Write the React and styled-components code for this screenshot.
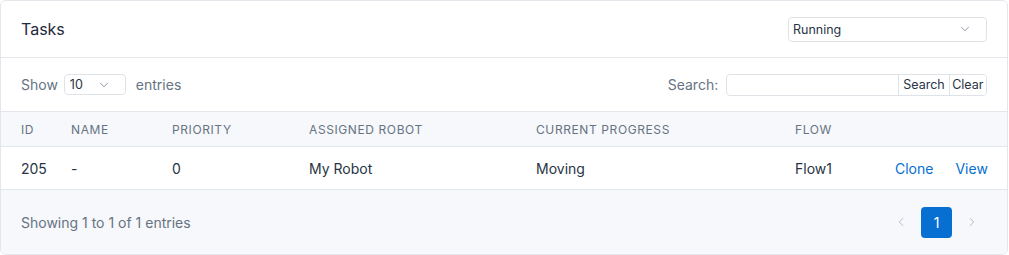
import React from "react"
import styled, { createGlobalStyle } from "styled-components"

const GlobalStyle = createGlobalStyle`
  * { box-sizing: border-box; }
  body {
    margin: 0;
    background: #ffffff;
    font-family: Inter, "Noto Sans", sans-serif;
    color: #283444;
  }
`

const Card = styled.div`
  width: 1008px;
  height: 255px;
  border: 1px solid #e3e6ea;
  border-radius: 6px;
  background: #ffffff;
  overflow: hidden;
  display: flex;
  flex-direction: column;
`

const CardHeader = styled.div`
  height: 57px;
  display: flex;
  align-items: center;
  justify-content: space-between;
  padding: 0 20px;
  border-bottom: 1px solid #e3e6ea;
`

const Title = styled.h3`
  margin: 0;
  font-size: 16px;
  font-weight: 400;
  color: #1f2a3a;
`

const SelectBox = styled.div`
  width: ${({ w }) => w}px;
  height: ${({ h }) => h}px;
  margin: 0 ${({ mr }) => mr || 0}px 0 ${({ ml }) => ml || 0}px;
  border: 1px solid #dfe3e8;
  border-radius: 4px;
  display: flex;
  align-items: center;
  justify-content: space-between;
  padding: 0 ${({ pr }) => pr}px 0 ${({ pl }) => pl}px;
  font-size: ${({ fs }) => fs}px;
  color: #283444;
  background: #fff;
`

const Controls = styled.div`
  height: 53px;
  display: flex;
  align-items: center;
  justify-content: space-between;
  padding: 0 20px;
  font-size: 14px;
  color: #667382;
`

const Group = styled.div`
  display: flex;
  align-items: center;
  gap: ${({ gap }) => gap || 0}px;
`

const SearchWrap = styled.div`
  display: flex;
  height: 22px;
  border: 1px solid #dfe3e8;
  border-radius: 4px;
  overflow: hidden;
`

const SearchInput = styled.div`
  width: 171px;
`

const SearchButton = styled.div`
  display: flex;
  align-items: center;
  padding: 0 ${({ px }) => px}px;
  border-left: 1px solid #dfe3e8;
  font-size: 12.5px;
  color: #283444;
  background: #fff;
`

const Table = styled.table`
  width: 100%;
  border-collapse: collapse;
  table-layout: fixed;
`

const Th = styled.th`
  height: 35px;
  padding: 0 0 0 ${({ first }) => (first ? 20 : 0)}px;
  background: #f6f8fb;
  border-top: 1px solid #e3e6ea;
  border-bottom: 1px solid #e3e6ea;
  text-align: left;
  font-size: 12px;
  font-weight: 400;
  letter-spacing: 0.05em;
  text-transform: uppercase;
  color: #667382;
`

const Td = styled.td`
  height: 43px;
  padding: 0 ${({ last }) => (last ? 20 : 0)}px 0 ${({ first }) => (first ? 20 : 0)}px;
  font-size: 14px;
  color: #283444;
  border-bottom: 1px solid #e3e6ea;
  text-align: ${({ last }) => (last ? "right" : "left")};
  white-space: nowrap;
`

const Link = styled.a`
  color: #066fd1;
  text-decoration: none;
  margin-left: ${({ ml }) => ml || 0}px;
`

const Footer = styled.div`
  flex: 1;
  background: #f6f8fb;
  display: flex;
  align-items: center;
  justify-content: space-between;
  padding: 0 20px;
  font-size: 14px;
  color: #667382;
`

const Pager = styled.div`
  display: flex;
  align-items: center;
  gap: 5px;
`

const PageArrow = styled.div`
  width: 30px;
  height: 31px;
  display: flex;
  align-items: center;
  justify-content: center;
`

const PageButton = styled.div`
  width: 31px;
  height: 31px;
  border-radius: 4px;
  background: #066fd1;
  color: #fff;
  display: flex;
  align-items: center;
  justify-content: center;
  font-size: 14px;
`

const Chevron = ({ dir = "down", size = 14, color = "#8a95a3" }) => {
  const paths = {
    down: "M4 6l4 4 4-4",
    left: "M10 4l-4 4 4 4",
    right: "M6 4l4 4-4 4",
  }
  return (
    <svg width={size} height={size} viewBox="0 0 16 16" fill="none">
      <path d={paths[dir]} stroke={color} strokeWidth="1.1" strokeLinecap="round" strokeLinejoin="round" />
    </svg>
  )
}

const columns = [
  { label: "ID", width: 70 },
  { label: "Name", width: 101 },
  { label: "Priority", width: 137 },
  { label: "Assigned Robot", width: 227 },
  { label: "Current Progress", width: 259 },
  { label: "Flow", width: 100 },
  { label: "", width: 112 },
]

const row = ["205", "-", "0", "My Robot", "Moving", "Flow1"]

const App = () => {
  return (
    <>
      <GlobalStyle />
      <Card>
        <CardHeader>
          <Title>Tasks</Title>
          <SelectBox w={199} h={25} pl={4} pr={14} fs={12.5}>
            Running
            <Chevron />
          </SelectBox>
        </CardHeader>

        <Controls>
          <Group>
            Show
            <SelectBox w={62} h={21} pl={5} pr={14} fs={12.5} ml={6} mr={10}>
              10
              <Chevron />
            </SelectBox>
            entries
          </Group>
          <Group gap={8}>
            Search:
            <SearchWrap>
              <SearchInput />
              <SearchButton px={4}>Search</SearchButton>
              <SearchButton px={2.5}>Clear</SearchButton>
            </SearchWrap>
          </Group>
        </Controls>

        <Table>
          <colgroup>
            {columns.map((c, i) => (
              <col key={i} style={{ width: c.width }} />
            ))}
          </colgroup>
          <thead>
            <tr>
              {columns.map((c, i) => (
                <Th key={i} first={i === 0}>{c.label}</Th>
              ))}
            </tr>
          </thead>
          <tbody>
            <tr>
              {row.map((v, i) => (
                <Td key={i} first={i === 0}>{v}</Td>
              ))}
              <Td last>
                <Link href="#">Clone</Link>
                <Link href="#" ml={22}>View</Link>
              </Td>
            </tr>
          </tbody>
        </Table>

        <Footer>
          Showing 1 to 1 of 1 entries
          <Pager>
            <PageArrow><Chevron dir="left" color="#b0b7c1" /></PageArrow>
            <PageButton>1</PageButton>
            <PageArrow><Chevron dir="right" color="#b0b7c1" /></PageArrow>
          </Pager>
        </Footer>
      </Card>
    </>
  )
}

export default App
